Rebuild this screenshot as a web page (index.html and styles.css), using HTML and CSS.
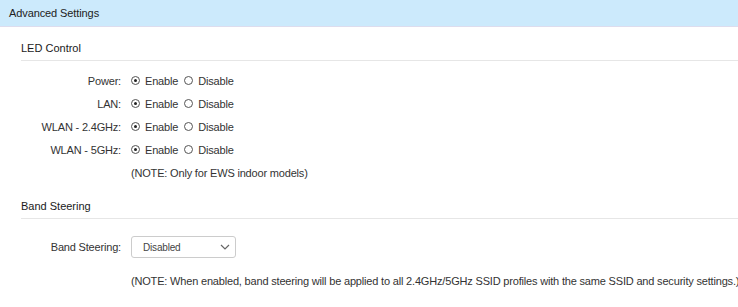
FILE: index.html
```html
<!DOCTYPE html>
<html lang="en">
<head>
  <meta charset="UTF-8">
  <title>Advanced Settings</title>
  <link rel="stylesheet" href="styles.css">
</head>
<body>
  <div class="panel-title">Advanced Settings</div>

  <!-- LED Control -->
  <div class="section">
    <h3 class="section-title">LED Control</h3>
    <div class="rows">
      <div class="row">
        <span class="label">Power:</span>
        <span class="radio checked"></span><span class="opt">Enable</span>
        <span class="radio"></span><span class="opt">Disable</span>
      </div>
      <div class="row">
        <span class="label">LAN:</span>
        <span class="radio checked"></span><span class="opt">Enable</span>
        <span class="radio"></span><span class="opt">Disable</span>
      </div>
      <div class="row">
        <span class="label">WLAN - 2.4GHz:</span>
        <span class="radio checked"></span><span class="opt">Enable</span>
        <span class="radio"></span><span class="opt">Disable</span>
      </div>
      <div class="row">
        <span class="label">WLAN - 5GHz:</span>
        <span class="radio checked"></span><span class="opt">Enable</span>
        <span class="radio"></span><span class="opt">Disable</span>
      </div>
      <div class="row">
        <span class="label"></span>
        <span class="note">(NOTE: Only for EWS indoor models)</span>
      </div>
    </div>
  </div>

  <!-- Band Steering -->
  <div class="section">
    <h3 class="section-title">Band Steering</h3>
    <div class="rows">
      <div class="row select-row">
        <span class="label">Band Steering:</span>
        <div class="select">
          <span>Disabled</span>
          <svg width="10" height="6" viewBox="0 0 10 6"><path d="M1 1l4 4 4-4" fill="none" stroke="#666" stroke-width="1.2"/></svg>
        </div>
      </div>
      <div class="row">
        <span class="label"></span>
        <span class="note">(NOTE: When enabled, band steering will be applied to all 2.4GHz/5GHz SSID profiles with the same SSID and security settings.)</span>
      </div>
    </div>
  </div>
</body>
</html>
```

FILE: styles.css
```css
* {
  margin: 0;
  padding: 0;
  box-sizing: border-box;
}

body {
  font-family: "Liberation Sans", Arial, sans-serif;
  font-size: 11px;
  letter-spacing: -0.18px;
  color: #333;
  background: #fff;
  overflow: hidden;
}

/* Title bar */
.panel-title {
  height: 27px;
  line-height: 26px;
  padding-left: 9px;
  letter-spacing: -0.1px;
  color: #222;
  background: #cceafc;
  border-bottom: 1px solid #dde;
}

/* Sections */
.section {
  padding-left: 21px;
}

.section-title {
  font-size: 11px;
  font-weight: normal;
  letter-spacing: 0;
  color: #1a1a1a;
  padding-top: 15px;
  height: 34px;
  border-bottom: 1px solid #e6e6e6;
}

.rows {
  padding-top: 8px;
  padding-bottom: 1px;
}

.row {
  display: flex;
  align-items: center;
  height: 23px;
  white-space: nowrap;
}

.label {
  flex-shrink: 0;
  width: 100px;
  text-align: right;
  margin-right: 10px;
}

.radio {
  flex-shrink: 0;
  width: 9px;
  height: 9px;
  border: 1px solid #555;
  border-radius: 50%;
  margin-right: 5px;
  position: relative;
}

.radio.checked::after {
  content: "";
  position: absolute;
  left: 2px;
  top: 2px;
  width: 3px;
  height: 3px;
  border-radius: 50%;
  background: #222;
}

.opt {
  margin-right: 6px;
}

/* Select */
.select-row {
  height: 22px;
  margin-top: 9px;
  margin-bottom: 11px;
}

.select {
  flex-shrink: 0;
  width: 105px;
  height: 22px;
  border: 1px solid #ccc;
  border-radius: 3px;
  display: flex;
  align-items: center;
  justify-content: space-between;
  padding: 0 5px 0 11px;
  font-size: 10px;
  color: #444;
}
```
